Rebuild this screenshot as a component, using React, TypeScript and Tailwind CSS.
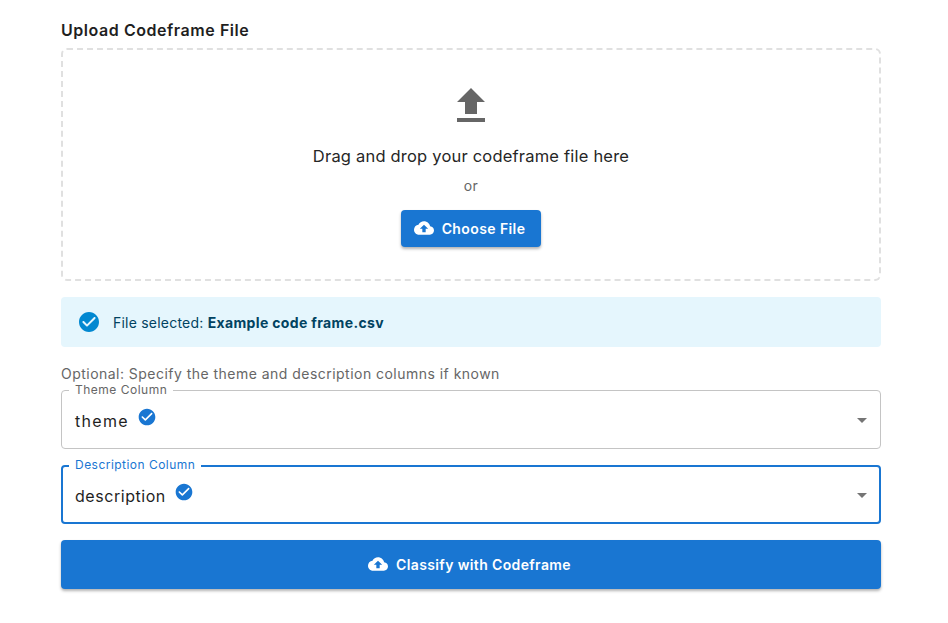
const UP = "M19.35 10.04C18.67 6.59 15.64 4 12 4 9.11 4 6.59 5.64 5.35 8.04 2.34 8.36 0 10.91 0 14c0 3.31 2.69 6 6 6h13c2.76 0 5-2.24 5-5 0-2.64-2.05-4.78-4.65-4.96zM14 13v4h-4v-4H7l5-5 5 5h-3z";
const CHECK = "M12 2C6.48 2 2 6.48 2 12s4.48 10 10 10 10-4.48 10-10S17.52 2 12 2zM9.29 16.29 5.7 12.7a.9959.9959 0 0 1 0-1.41c.39-.39 1.02-.39 1.41 0L10 14.17l6.88-6.88c.39-.39 1.02-.39 1.41 0 .39.39.39 1.02 0 1.41l-7.59 7.59c-.38.39-1.02.39-1.41 0z";

function Icon({ d, className }: { d: string; className: string }) {
  return (
    <svg viewBox="0 0 24 24" fill="currentColor" className={className}>
      <path d={d} />
    </svg>
  );
}

function SelectBox({ label, value, focused }: { label: string; value: string; focused?: boolean }) {
  return (
    <div
      className={
        focused
          ? "relative h-[59px] rounded border-2 border-[#1976d2] flex items-center pl-[12px] pr-[5px]"
          : "relative h-[59px] rounded border border-[#c4c4c4] flex items-center pl-[13px] pr-[6px]"
      }
    >
      <span
        className={
          focused
            ? "absolute left-[6px] top-[-9px] bg-white px-[6px] text-[12px] leading-[14px] tracking-[0.47px] text-[#1976d2]"
            : "absolute left-[7px] top-[-8px] bg-white px-[6px] text-[12px] leading-[14px] tracking-[0.5px] text-[#666666]"
        }
      >
        {label}
      </span>
      <span className={focused ? "text-[16px] tracking-[0.55px] text-[#1f1f1f] mt-[3px]" : "text-[16px] tracking-[1.3px] text-[#1f1f1f] mt-[3px]"}>{value}</span>
      <Icon d={CHECK} className="w-[20px] h-[20px] text-[#1976d2] ml-[8px] mb-[6px]" />
      <svg viewBox="0 0 24 24" fill="currentColor" className="w-6 h-6 text-[#757575] ml-auto">
        <path d="M7 10l5 5 5-5z" />
      </svg>
    </div>
  );
}

export default function App() {
  return (
    <div className="w-[948px] h-[623px] bg-white pl-[61px] pr-[67px] pt-[20px] font-['Inter','Liberation_Sans',sans-serif] overflow-hidden">
      <h2 className="text-[16px] leading-[20px] font-semibold tracking-[0.55px] text-[#1f1f1f]">Upload Codeframe File</h2>
      <div className="mt-[8px] h-[233px] rounded-[6px] border-2 border-dashed border-[#e0e0e0] flex flex-col items-center pt-[32px]">
        <Icon d="M9 16h6v-6h4l-7-7-7 7h4zm-4 2h14v2H5z" className="w-12 h-12 text-[#666666]" />
        <p className="mt-[14px] text-[16.5px] leading-[24px] tracking-[0.2px] text-[#262626]">Drag and drop your codeframe file here</p>
        <p className="mt-[8px] text-[14px] leading-[20px] tracking-[0.4px] text-[#666666]">or</p>
        <button className="mt-[14px] w-[140px] h-[37px] pr-[3px] pb-[1px] rounded bg-[#1976d2] text-white flex items-center justify-center gap-[8px] text-[14px] font-semibold tracking-[0.4px] shadow-[0_2px_3px_rgba(0,0,0,0.3)]">
          <Icon d={UP} className="w-5 h-5" />
          Choose File
        </button>
      </div>
      <div className="mt-[16px] h-[50px] rounded bg-[#e5f6fd] flex items-center pl-[16px] text-[14px] tracking-[0.22px] text-[#014361]">
        <Icon d={CHECK} className="w-6 h-6 text-[#0288d1] mr-[12px]" />
        <span>
          File selected: <strong className="font-bold tracking-[0.35px]">Example code frame.csv</strong>
        </span>
      </div>
      <p className="mt-[17px] mb-[6px] text-[14px] leading-[20px] tracking-[0.47px] text-[#666666]">Optional: Specify the theme and description columns if known</p>
      <SelectBox label="Theme Column" value="theme" />
      <div className="h-[16px]" />
      <SelectBox label="Description Column" value="description" focused />
      <button className="mt-[16px] w-full h-[49px] pb-[1px] pr-[3px] rounded bg-[#1976d2] text-white flex items-center justify-center gap-[8px] text-[14px] font-semibold tracking-[0.37px] shadow-[0_2px_3px_rgba(0,0,0,0.3)]">
        <Icon d={UP} className="w-5 h-5" />
        Classify with Codeframe
      </button>
    </div>
  );
}
